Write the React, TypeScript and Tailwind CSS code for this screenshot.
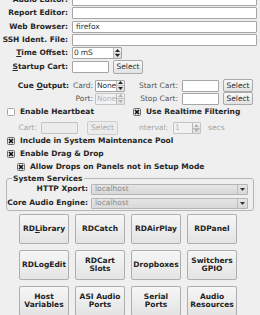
import type { ReactNode } from 'react'

function Field({ w, text, disabled }: { w: string; text?: string; disabled?: boolean }) {
  return (
    <div className={`${w} h-[12px] flex items-center px-[3px] border rounded-[1px] ${disabled ? 'bg-[#ececec] border-[#c4c4c4]' : 'bg-white border-[#a6a6a6]'} font-normal text-[#333]`}>
      {text}
    </div>
  )
}

function Btn({ w, h, children, disabled }: { w: string; h: string; children: ReactNode; disabled?: boolean }) {
  return (
    <div className={`${w} ${h} flex items-center justify-center text-center rounded-[2px] border ${disabled ? 'border-[#cdcdcd] bg-[#ececec] text-[#a9a9a9]' : 'border-[#a9a9a9] bg-gradient-to-b from-[#f8f8f8] to-[#e2e2e2] text-[#2a2a2a]'} font-normal`}>
      {children}
    </div>
  )
}

function Spin({ w, text, disabled }: { w: string; text: string; disabled?: boolean }) {
  const c = disabled ? '#b0b0b0' : '#222'
  return (
    <div className={`${w} h-[12px] flex border rounded-[1px] ${disabled ? 'border-[#c4c4c4] bg-[#f2f2f2]' : 'border-[#a6a6a6] bg-white'}`}>
      <div className={`flex-1 min-w-0 flex items-center pl-[1px] font-normal tracking-[-0.15px] whitespace-nowrap ${disabled ? 'text-[#b4b4b4]' : 'text-[#333]'}`}>{text}</div>
      <div className="w-[8px] shrink-0 flex flex-col border-l border-[#b8b8b8] bg-gradient-to-b from-[#f4f4f4] to-[#dedede]">
        <div className="flex-1 flex items-center justify-center border-b border-[#c0c0c0]">
          <svg width="5" height="3" viewBox="0 0 5 3"><path d="M0 3 L2.5 0 L5 3 Z" fill={c} /></svg>
        </div>
        <div className="flex-1 flex items-center justify-center">
          <svg width="5" height="3" viewBox="0 0 5 3"><path d="M0 0 L2.5 3 L5 0 Z" fill={c} /></svg>
        </div>
      </div>
    </div>
  )
}

function Check({ on }: { on?: boolean }) {
  return (
    <svg width="8" height="8" viewBox="0 0 8 8" className="shrink-0">
      <rect x="0.5" y="0.5" width="7" height="7" rx="1" fill={on ? '#e8e8e8' : '#fff'} stroke={on ? '#6a6a6a' : '#a8a8a8'} />
      {on && <path d="M2 2 L6 6 M6 2 L2 6" stroke="#111" strokeWidth="1.7" />}
    </svg>
  )
}

function Combo({ text }: { text: string }) {
  return (
    <div className="w-[157px] h-[11px] flex border border-[#b4b4b4] rounded-[1px] bg-gradient-to-b from-[#e6e6e6] to-[#d8d8d8]">
      <div className="flex-1 flex items-center pl-[3px] font-normal text-[#8a8a8a]">{text}</div>
      <div className="w-[10px] flex items-center justify-center border-l border-[#bcbcbc]">
        <svg width="5" height="3" viewBox="0 0 5 3"><path d="M0 0 L2.5 3 L5 0 Z" fill="#333" /></svg>
      </div>
    </div>
  )
}

const TOP = [
  { label: 'Audio Editor:', value: '', mt: '' },
  { label: 'Report Editor:', value: '', mt: 'mt-[1px]' },
  { label: 'Web Browser:', value: 'firefox', mt: 'mt-[2px]' },
  { label: 'SSH Ident. File:', value: '', mt: 'mt-[1px]' },
]

const BUTTONS = [
  ['RDLibrary'], ['RDCatch'], ['RDAirPlay'], ['RDPanel'],
  ['RDLogEdit'], ['RDCart', 'Slots'], ['Dropboxes'], ['Switchers', 'GPIO'],
  ['Host', 'Variables'], ['ASI Audio', 'Ports'], ['Serial', 'Ports'], ['Audio', 'Resources'],
]

export default function App() {
  return (
    <div className="w-[260px] h-[315px] overflow-hidden bg-[#efefef] text-[7.5px] leading-none text-[#262626] font-bold font-['DejaVu_Sans',sans-serif]">
      <div className="flex flex-col -mt-[6px]">
        {TOP.map(r => (
          <div key={r.label} className={`flex items-center h-[12px] ${r.mt}`}>
            <div className="w-[68px] text-right">{r.label}</div>
            <div className="ml-[4px]"><Field w="w-[185px]" text={r.value} /></div>
          </div>
        ))}
        <div className="flex items-center h-[12px] mt-[1px]">
          <div className="w-[68px] text-right"><span className="underline">T</span>ime Offset:</div>
          <div className="ml-[4px]"><Spin w="w-[50px]" text="0 mS" /></div>
        </div>
        <div className="flex items-center h-[14px] mt-[1px]">
          <div className="w-[68px] text-right"><span className="underline">S</span>tartup Cart:</div>
          <div className="ml-[4px]"><Field w="w-[37px]" /></div>
          <div className="ml-[4px]"><Btn w="w-[30px]" h="h-[14px]">Select</Btn></div>
        </div>

        {/* cue output */}
        <div className="flex items-center h-[13px] mt-[5px]">
          <div className="w-[69px] text-right">Cue <span className="underline">O</span>utput:</div>
          <div className="w-[24px] text-right font-normal text-[#555]">Card:</div>
          <div className="ml-[2px]"><Spin w="w-[30px]" text="None" /></div>
          <div className="w-[53px] text-right font-normal text-[#555]">Start Cart:</div>
          <div className="ml-[4px]"><Field w="w-[37px]" /></div>
          <div className="ml-[4px]"><Btn w="w-[30px]" h="h-[13px]">Select</Btn></div>
        </div>
        <div className="flex items-center h-[13px]">
          <div className="w-[69px]" />
          <div className="w-[24px] text-right font-normal text-[#555]">Port:</div>
          <div className="ml-[2px]"><Spin w="w-[30px]" text="None" disabled /></div>
          <div className="w-[53px] text-right font-normal text-[#555]">Stop Cart:</div>
          <div className="ml-[4px]"><Field w="w-[37px]" /></div>
          <div className="ml-[4px]"><Btn w="w-[30px]" h="h-[13px]">Select</Btn></div>
        </div>

        {/* heartbeat / filtering */}
        <div className="flex items-center h-[10px] mt-[2px]">
          <div className="w-[133px] flex items-center pl-[7px] gap-[5px]"><Check />Enable Heartbeat</div>
          <div className="flex items-center gap-[5px]"><Check on />Use Realtime Filtering</div>
        </div>
        <div className="flex items-center h-[14px] mt-[4px] font-normal">
          <div className="w-[37px] text-right text-[#a4a4a4]">Cart:</div>
          <div className="ml-[4px]"><Field w="w-[37px]" disabled /></div>
          <div className="ml-[9px]"><Btn w="w-[31px]" h="h-[14px]" disabled>Select</Btn></div>
          <div className="ml-[21px] text-[#a4a4a4]">nterval:</div>
          <div className="ml-[5px]"><Spin w="w-[28px]" text="1" disabled /></div>
          <div className="ml-[7px] text-[#a4a4a4]">secs</div>
        </div>

        <div className="flex items-center h-[10px] mt-[1px] pl-[7px] gap-[5px]"><Check on />Include in System Maintenance Pool</div>
        <div className="flex items-center h-[10px] mt-[3px] pl-[7px] gap-[5px]"><Check on />Enable Drag &amp; Drop</div>
        <div className="flex items-center h-[10px] mt-[3px] pl-[17px] gap-[5px]"><Check on />Allow Drops on Panels not in Setup Mode</div>

        {/* system services */}
        <fieldset className="mt-[3px] ml-[6px] w-[248px] border border-[#b6b6b6] rounded-[3px] pb-[1px]">
          <legend className="ml-[5px] px-[1px]">System Services</legend>
          <div className="flex items-center h-[11px] mt-[1px]">
            <div className="w-[81px] text-right">HTTP Xport:</div>
            <div className="ml-[3px]"><Combo text="localhost" /></div>
          </div>
          <div className="flex items-center h-[11px] mt-[3px]">
            <div className="w-[81px] text-right">Core Audio Engine:</div>
            <div className="ml-[3px]"><Combo text="localhost" /></div>
          </div>
        </fieldset>

        <div className="grid grid-cols-[repeat(4,50px)] auto-rows-[30px] gap-[6px] ml-[19px] mt-[3px]">
          {BUTTONS.map(b => (
            <div key={b.join(' ')} className="flex flex-col items-center justify-center gap-[1px] rounded-[2px] border border-[#aeaeae] bg-gradient-to-b from-[#f6f6f6] to-[#e4e4e4] text-[#222]">
              {b[0] === 'RDLibrary' ? <span>RD<span className="underline">L</span>ibrary</span> : b.map(l => <span key={l}>{l}</span>)}
            </div>
          ))}
        </div>
      </div>
    </div>
  )
}
